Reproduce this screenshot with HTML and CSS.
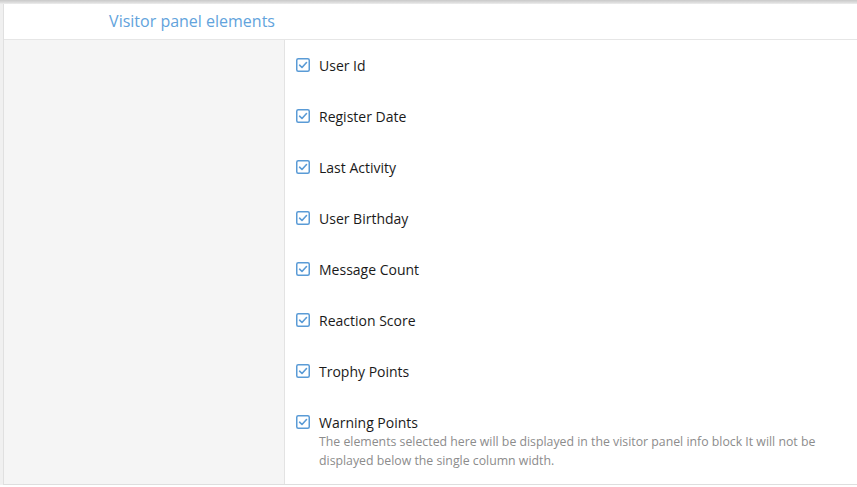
FILE: index.html
```html
<!DOCTYPE html>
<html>
<head>
<meta charset="utf-8">
<link rel="stylesheet" href="styles.css">
</head>
<body>
<div class="topband"></div>
<div class="frame">
  <div class="panel">
    <div class="header">
      <div class="header-label">Visitor panel elements</div>
    </div>
    <div class="row">
      <div class="side"></div>
      <div class="main">
        <ul class="options">
          <li class="option"><svg class="cb" viewBox="0 0 14 14"><rect x="0.75" y="0.75" width="12.5" height="12.5" rx="1.5"/><path d="M3.6 7.2 L6 9.5 L10.5 4.5"/></svg><span>User Id</span></li>
          <li class="option"><svg class="cb" viewBox="0 0 14 14"><rect x="0.75" y="0.75" width="12.5" height="12.5" rx="1.5"/><path d="M3.6 7.2 L6 9.5 L10.5 4.5"/></svg><span>Register Date</span></li>
          <li class="option"><svg class="cb" viewBox="0 0 14 14"><rect x="0.75" y="0.75" width="12.5" height="12.5" rx="1.5"/><path d="M3.6 7.2 L6 9.5 L10.5 4.5"/></svg><span>Last Activity</span></li>
          <li class="option"><svg class="cb" viewBox="0 0 14 14"><rect x="0.75" y="0.75" width="12.5" height="12.5" rx="1.5"/><path d="M3.6 7.2 L6 9.5 L10.5 4.5"/></svg><span>User Birthday</span></li>
          <li class="option"><svg class="cb" viewBox="0 0 14 14"><rect x="0.75" y="0.75" width="12.5" height="12.5" rx="1.5"/><path d="M3.6 7.2 L6 9.5 L10.5 4.5"/></svg><span>Message Count</span></li>
          <li class="option"><svg class="cb" viewBox="0 0 14 14"><rect x="0.75" y="0.75" width="12.5" height="12.5" rx="1.5"/><path d="M3.6 7.2 L6 9.5 L10.5 4.5"/></svg><span>Reaction Score</span></li>
          <li class="option"><svg class="cb" viewBox="0 0 14 14"><rect x="0.75" y="0.75" width="12.5" height="12.5" rx="1.5"/><path d="M3.6 7.2 L6 9.5 L10.5 4.5"/></svg><span>Trophy Points</span></li>
          <li class="option"><svg class="cb" viewBox="0 0 14 14"><rect x="0.75" y="0.75" width="12.5" height="12.5" rx="1.5"/><path d="M3.6 7.2 L6 9.5 L10.5 4.5"/></svg><span>Warning Points</span></li>
        </ul>
        <p class="hint">The elements selected here will be displayed in the visitor panel info block It will not be displayed below the single column width.</p>
      </div>
    </div>
  </div>
</div>
</body>
</html>
```

FILE: styles.css
```css
html, body {
  margin: 0;
  padding: 0;
  background: #ffffff;
  font-family: "Open Sans", "Noto Sans", "Liberation Sans", sans-serif;
}

.topband {
  height: 4px;
  background: linear-gradient(#c9c9c9, #dcdcdc 60%, #eeeeee);
}

.frame {
  padding-left: 3px;
  background: #f0f0f0;
}

.panel {
  border-left: 1px solid #e0e0e0;
  border-bottom: 1px solid #dedede;
  background: #ffffff;
}

.header {
  height: 35px;
  border-bottom: 1px solid #e6e6e6;
  display: flex;
}

.header-label {
  width: 271px;
  padding-right: 10px;
  text-align: right;
  font-size: 16px;
  line-height: 35px;
  color: #62a3dc;
}

.row {
  display: grid;
  grid-template-columns: 281px 1fr;
}

.side {
  background: #f5f5f5;
  border-right: 1px solid #e3e3e3;
}

.main {
  padding: 15px 20px 14px 11px;
}

.options {
  list-style: none;
  margin: 0;
  padding: 0;
  display: flex;
  flex-direction: column;
  gap: 31px;
}

.option {
  display: flex;
  align-items: center;
  height: 20px;
  font-size: 14px;
  color: #1a1a1a;
}

.cb {
  width: 14px;
  height: 14px;
  margin-right: 9px;
  flex: none;
}

.cb rect {
  fill: #ffffff;
  stroke: #5a9bd6;
  stroke-width: 1.5;
}

.cb path {
  fill: none;
  stroke: #5a9bd6;
  stroke-width: 1.6;
  stroke-linecap: round;
  stroke-linejoin: round;
}

.hint {
  margin: 0 0 0 23px;
  font-size: 12.3px;
  line-height: 19px;
  color: #8c8c8c;
}
```
